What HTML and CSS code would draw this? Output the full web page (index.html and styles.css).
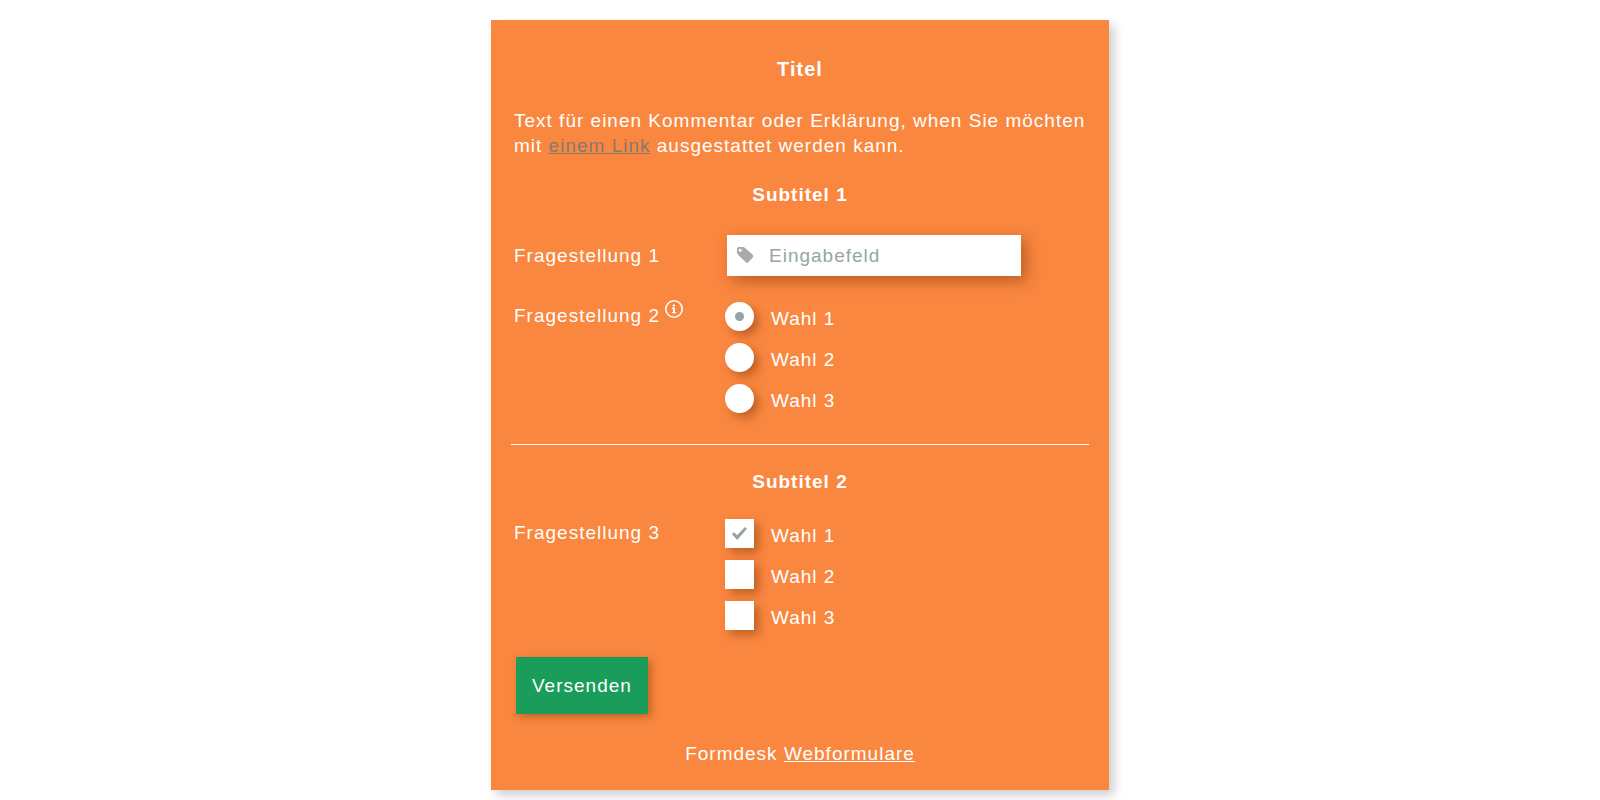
FILE: index.html
```html
<!DOCTYPE html>
<html lang="de">
<head>
    <meta charset="UTF-8">
    <meta name="viewport" content="width=device-width, initial-scale=1.0">
    <title>Titel</title>
    <link rel="stylesheet" href="styles.css">
</head>
<body>
    <form class="form-card">
        <h1>Titel</h1>
        <p class="intro">
            Text für einen Kommentar oder Erklärung, when Sie möchten mit <a href="#">einem Link</a> ausgestattet werden kann.
        </p>

        <h2>Subtitel 1</h2>
        <div class="question input-question">
            <label for="frage1">Fragestellung 1</label>
            <div class="input-group">
                <svg class="tag-icon" viewBox="0 0 17 17" aria-hidden="true">
                    <path fill-rule="evenodd" d="M0 1.5Q0 0 1.5 0H6Q7.2 0 8.1.9L15.7 7.8Q16.9 9 15.9 10.2L11.2 15.5Q10.2 16.6 9.1 15.6L.9 7.6Q0 6.7 0 5.5ZM3.2 1.7A1.5 1.5 0 1 0 3.2 4.7A1.5 1.5 0 1 0 3.2 1.7Z"/>
                </svg>
                <input type="text" id="frage1" placeholder="Eingabefeld">
            </div>
        </div>
        <div class="question">
            <div class="question-label">
                <span id="frage2">Fragestellung 2</span>
                <svg class="info-icon" viewBox="0 0 18 18" aria-hidden="true">
                    <circle cx="9" cy="9" r="8.2"/>
                    <path d="M7.8 4.4h2.2v2H7.8zM7 7.6h3v4.4h1.1v1.3H7V12h1V8.9H7z"/>
                </svg>
            </div>
            <div class="options" role="radiogroup" aria-labelledby="frage2">
                <label><input type="radio" name="frage2" checked><span>Wahl 1</span></label>
                <label><input type="radio" name="frage2"><span>Wahl 2</span></label>
                <label><input type="radio" name="frage2"><span>Wahl 3</span></label>
            </div>
        </div>

        <hr>

        <h2>Subtitel 2</h2>
        <div class="question">
            <div class="question-label">
                <span id="frage3">Fragestellung 3</span>
            </div>
            <div class="options" role="group" aria-labelledby="frage3">
                <label><input type="checkbox" name="frage3" checked><span>Wahl 1</span></label>
                <label><input type="checkbox" name="frage3"><span>Wahl 2</span></label>
                <label><input type="checkbox" name="frage3"><span>Wahl 3</span></label>
            </div>
        </div>

        <button type="submit">Versenden</button>

        <p class="footer">Formdesk <a href="#">Webformulare</a></p>
    </form>
</body>
</html>
```
FILE: styles.css
```css
* {
    box-sizing: border-box;
}
body {
    min-height: 100vh;
    margin: 0;
    padding: 20px 0 10px;
    background: #fff;
    color: #fff;
    font-family: "Liberation Sans", Arial, sans-serif;
    font-size: 19px;
    line-height: 25px;
    letter-spacing: 1px;
}
.form-card {
    max-width: 618px;
    margin: 0 auto;
    padding: 37px 20px 24px;
    background: #fa873f;
    box-shadow: 5px 5px 10px rgba(0, 0, 0, 0.2);
}
h1, h2 {
    margin: 0;
    font-size: 19px;
    text-align: center;
}
h1 {
    font-size: 20px;
}
.intro {
    margin: 26px 3px 24px;
}
.intro a {
    color: #857970;
}
.question {
    display: grid;
    grid-template-columns: 211px 1fr;
    margin: 25px 3px 0;
}
.input-question {
    align-items: center;
    margin: 28px 3px 26px;
}
.question-label {
    display: flex;
    align-items: flex-start;
    gap: 5px;
    padding-top: 1px;
}
.info-icon {
    width: 18px;
    height: 18px;
    margin-top: -3px;
    fill: #fff;
}
.info-icon circle {
    fill: none;
    stroke: #fff;
    stroke-width: 1.6;
}
.input-group {
    display: flex;
    align-items: center;
    gap: 15px;
    width: 294px;
    height: 41px;
    margin-left: 2px;
    padding: 0 10px;
    background: #fff;
    box-shadow: 5px 5px 15px rgba(110, 40, 0, 0.45);
}
.tag-icon {
    flex: none;
    width: 17px;
    height: 17px;
    fill: #aaa;
}
.input-group input {
    flex: 1;
    min-width: 0;
    padding: 0;
    border: 0;
    outline: 0;
    background: none;
    color: #95a5a6;
    font: inherit;
    letter-spacing: inherit;
}
.input-group input::placeholder {
    color: #95a5a6;
}
.options {
    display: flex;
    flex-direction: column;
    gap: 12px;
}
.options label {
    display: flex;
    align-items: center;
    gap: 17px;
    height: 29px;
}
.options span {
    padding-top: 3px;
}
.options input {
    appearance: none;
    display: grid;
    place-items: center;
    width: 29px;
    height: 29px;
    margin: 0;
    background: #fff;
    box-shadow: 5px 5px 10px rgba(110, 40, 0, 0.4);
}
.options input[type="radio"] {
    border-radius: 50%;
}
.options input:checked::before {
    content: "";
    background: #95a5a6;
}
.options input[type="radio"]:checked::before {
    width: 9px;
    height: 9px;
    border-radius: 50%;
}
.options input[type="checkbox"]:checked::before {
    width: 15px;
    height: 13px;
    clip-path: polygon(0 55%, 13% 38%, 34% 64%, 86% 0, 100% 14%, 35% 100%);
}
hr {
    margin: 31px 0 24px;
    border: 0;
    border-top: 1px solid #fff;
}
button {
    display: block;
    margin: 27px 5px;
    padding: 16px;
    border: 0;
    background: #1a9c5b;
    box-shadow: 3px 3px 8px rgba(110, 40, 0, 0.4);
    color: #fff;
    font: inherit;
    letter-spacing: inherit;
    cursor: pointer;
}
.footer {
    margin: 0;
    text-align: center;
}
.footer a {
    color: #fff;
}
```
